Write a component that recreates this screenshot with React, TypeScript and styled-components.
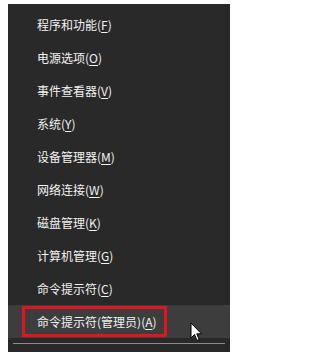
import React from "react";
import styled, {createGlobalStyle} from "styled-components";

const GlobalStyle = createGlobalStyle`
    html, body {
        margin: 0;
        padding: 0;
        background: #fff;
    }
    body {
        font-family: "Noto Sans CJK SC", "Noto Sans", sans-serif;
    }
`;

const Page = styled.div`
    width: 241px;
    height: 352px;
    overflow: hidden;
    padding: 4px 11px 0 8px;
    box-sizing: border-box;
`;

const Menu = styled.ul`
    list-style: none;
    margin: 0;
    padding: 4px 0 0;
    width: 222px;
    height: 360px;
    background: #292929;
    display: flex;
    flex-direction: column;
`;

const MenuItem = styled.li<{ $active?: boolean }>`
    position: relative;
    height: 33px;
    display: flex;
    align-items: center;
    padding-left: 29px;
    color: #f2f2f2;
    font-size: 12px;
    background: ${p => p.$active ? "#3d3d3d" : "transparent"};

    u {
        text-underline-offset: 2px;
    }
`;

const Highlight = styled.span`
    position: absolute;
    left: 14px;
    top: 1px;
    width: 145px;
    height: 31px;
    box-sizing: border-box;
    border: 3px solid #e3141c;
`;

const Cursor = styled.svg`
    position: absolute;
    left: 182px;
    top: 17px;
`;

const Separator = styled.li`
    height: 1px;
    margin: 5px 5px 0;
    background: #8c8c8c;
`;

interface IItem {
    label: string
    key: string
}

const ITEMS: IItem[] = [
    {label: "程序和功能", key: "F"},
    {label: "电源选项", key: "O"},
    {label: "事件查看器", key: "V"},
    {label: "系统", key: "Y"},
    {label: "设备管理器", key: "M"},
    {label: "网络连接", key: "W"},
    {label: "磁盘管理", key: "K"},
    {label: "计算机管理", key: "G"},
    {label: "命令提示符", key: "C"},
    {label: "命令提示符(管理员)", key: "A"},
];

export default function App() {
    const last = ITEMS.length - 1;
    return (
        <Page>
            <GlobalStyle/>
            <Menu>
                {ITEMS.map((item, index) => (
                    <MenuItem key={index} $active={index === last}>
                        {item.label}(<u>{item.key}</u>)
                        {index === last && (
                            <>
                                <Highlight/>
                                <Cursor width="13" height="21" viewBox="0 0 13 21">
                                    <path d="M1 1 L1 16 L4.5 12.5 L7 18.5 L9.2 17.6 L6.8 11.8 L11.5 11.8 Z"
                                          fill="#fff" stroke="#000" strokeWidth="1" strokeLinejoin="round"/>
                                </Cursor>
                            </>
                        )}
                    </MenuItem>
                ))}
                <Separator/>
            </Menu>
        </Page>
    );
}
